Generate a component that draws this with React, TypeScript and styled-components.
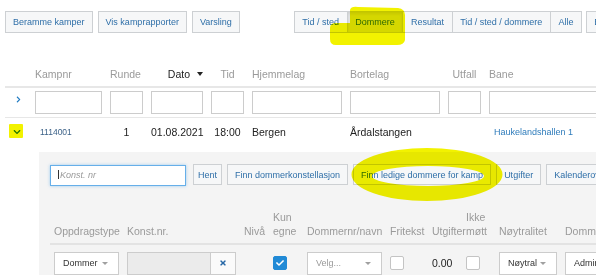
import styled, { createGlobalStyle } from "styled-components";
import { FaChevronRight, FaChevronDown, FaTimes, FaCheck } from "react-icons/fa";

const GlobalStyle = createGlobalStyle`
  html, body { margin: 0; padding: 0; background: #fff; overflow: hidden; }
  body { font-family: "Liberation Sans", Arial, sans-serif; color: #333; }
  *, *::before, *::after { box-sizing: border-box; }
`;

const Page = styled.div`
  position: relative;
  width: 596px;
  height: 275px;
  overflow: hidden;
`;

const Toolbar = styled.div`
  display: flex;
  align-items: center;
  padding: 11px 0 0 5px;
  white-space: nowrap;
`;

const ButtonGroup = styled.div<{ $joined?: boolean; $offset?: number }>`
  display: flex;
  flex-shrink: 0;
  gap: ${(p) => (p.$joined ? 0 : 5)}px;
  margin-left: ${(p) => p.$offset ?? 0}px;
  & > button + button {
    margin-left: ${(p) => (p.$joined ? -1 : 0)}px;
  }
`;

const Btn = styled.button<{ $active?: boolean; $h?: number; $pad?: number }>`
  flex-shrink: 0;
  height: ${(p) => p.$h ?? 22}px;
  padding: 0 ${(p) => p.$pad ?? 7}px;
  border: 1px solid #cdd0d3;
  border-radius: 0;
  background: ${(p) => (p.$active ? "#e1e3e5" : "#f6f7f8")};
  box-shadow: ${(p) => (p.$active ? "inset 0 2px 3px rgba(0,0,0,0.08)" : "none")};
  color: #2f6fa8;
  font: 9px "Liberation Sans", Arial, sans-serif;
  white-space: nowrap;
`;

const mainCols = "22px 67px 33px 52px 33px 90px 90px 33px 160px";

const MainRow = styled.div<{ $h: number; $line?: number }>`
  display: grid;
  grid-template-columns: ${mainCols};
  column-gap: 8px;
  align-items: center;
  margin-left: 5px;
  height: ${(p) => p.$h}px;
  border-bottom: ${(p) => (p.$line ? `${p.$line}px solid #e7e7e7` : "none")};
`;

const HeaderRow = styled(MainRow)`
  margin-top: 29px;
`;

const HeadCell = styled.div<{ $align?: string; $dark?: boolean }>`
  display: flex;
  align-items: center;
  justify-content: ${(p) => p.$align ?? "flex-start"};
  gap: 7px;
  font-size: 10.5px;
  color: ${(p) => (p.$dark ? "#222" : "#9a9a9a")};
  white-space: nowrap;
`;

const SortArrow = styled.span`
  width: 0;
  height: 0;
  border-left: 3.5px solid transparent;
  border-right: 3.5px solid transparent;
  border-top: 4px solid #222;
`;

const ChevronCell = styled.div<{ $down?: boolean }>`
  display: flex;
  align-self: ${(p) => (p.$down ? "center" : "start")};
  padding-left: ${(p) => (p.$down ? 8 : 10)}px;
  margin-top: ${(p) => (p.$down ? 0 : 8)}px;
  color: #1f7ac2;
`;

const FilterInput = styled.input`
  width: 100%;
  height: 23px;
  border: 1px solid #cccccc;
  border-radius: 0;
  background: #fff;
  padding: 0 4px;
`;

const DataCell = styled.div<{ $align?: string; $size?: number; $color?: string; $pad?: number }>`
  text-align: ${(p) => p.$align ?? "left"};
  font-size: ${(p) => p.$size ?? 10.5}px;
  color: ${(p) => p.$color ?? "#222"};
  padding-left: ${(p) => p.$pad ?? 0}px;
  white-space: nowrap;
`;

const Panel = styled.div`
  margin: 7px 0 0 39px;
  background: #f4f4f4;
  padding: 12px 0 30px 11px;
`;

const ActionRow = styled.div`
  display: flex;
  align-items: center;
  gap: 5px;
  white-space: nowrap;
`;

const KonstField = styled.div`
  position: relative;
  flex-shrink: 0;
  width: 136px;
  margin-right: 2px;
`;

const KonstInput = styled.input`
  width: 100%;
  height: 21px;
  border: 1px solid #66afe9;
  border-radius: 0;
  outline: none;
  box-shadow: 0 0 3px rgba(102, 175, 233, 0.6);
  background: #fff;
  padding: 0 0 0 9px;
  font: 9px "Liberation Sans", Arial, sans-serif;
  &::placeholder {
    color: #9a9a9a;
    font-style: italic;
  }
`;

const TextCaret = styled.span`
  position: absolute;
  left: 8px;
  top: 6px;
  width: 1px;
  height: 9px;
  background: #333;
`;

const subCols = "73px 117px 29px 34px 83px 42px 34px 33px 66px 120px";

const SubGrid = styled.div`
  display: grid;
  grid-template-columns: ${subCols};
  margin-top: 24px;
`;

const SubHead = styled.div<{ $align?: string; $wrap?: boolean }>`
  display: flex;
  flex-direction: column;
  justify-content: flex-end;
  text-align: ${(p) => p.$align ?? "left"};
  padding: 0 4px 4px;
  border-bottom: 2px solid #e3e3e3;
  font-size: 10.5px;
  line-height: 14.5px;
  color: #9a9a9a;
  white-space: ${(p) => (p.$wrap ? "normal" : "nowrap")};
`;

const SubCell = styled.div`
  display: flex;
  align-items: center;
  height: 23px;
  margin-top: 7px;
  padding: 0 4px;
  font-size: 10.5px;
  color: #222;
  white-space: nowrap;
`;

const Select = styled.div<{ $w: number; $muted?: boolean }>`
  flex-shrink: 0;
  display: flex;
  align-items: center;
  justify-content: space-between;
  width: ${(p) => p.$w}px;
  height: 23px;
  padding: 0 10px 0 8px;
  border: 1px solid #cccccc;
  background: #fff;
  font-size: 9px;
  color: ${(p) => (p.$muted ? "#9a9a9a" : "#333")};
  overflow: hidden;
`;

const SelectCaret = styled.span`
  flex-shrink: 0;
  width: 0;
  height: 0;
  border-left: 3px solid transparent;
  border-right: 3px solid transparent;
  border-top: 3px solid #a0a0a0;
`;

const DisabledInput = styled.div`
  width: 84px;
  height: 23px;
  border: 1px solid #cccccc;
  background: #ebebeb;
`;

const ClearBtn = styled.div`
  display: flex;
  align-items: center;
  justify-content: center;
  width: 26px;
  height: 23px;
  margin-left: -1px;
  border: 1px solid #cccccc;
  background: #fafafa;
  color: #2667a6;
`;

const Checkbox = styled.span<{ $checked?: boolean }>`
  display: flex;
  align-items: center;
  justify-content: center;
  width: 14px;
  height: 14px;
  border-radius: 2px;
  border: 1px solid ${(p) => (p.$checked ? "#218ad6" : "#c4c4c4")};
  background: ${(p) => (p.$checked ? "#218ad6" : "#fff")};
  color: #fff;
`;

const Marker = styled.svg`
  position: absolute;
  left: 0;
  top: 0;
  pointer-events: none;
  mix-blend-mode: multiply;
`;

const leftButtons = ["Beramme kamper", "Vis kamprapporter", "Varsling"];
const viewButtons = ["Tid / sted", "Dommere", "Resultat", "Tid / sted / dommere", "Alle"];

export default function App() {
  return (
    <Page>
      <GlobalStyle />
      <Toolbar>
        <ButtonGroup>
          {leftButtons.map((b) => (
            <Btn key={b}>{b}</Btn>
          ))}
        </ButtonGroup>
        <ButtonGroup $joined $offset={54}>
          {viewButtons.map((b) => (
            <Btn key={b} $pad={7.6} $active={b === "Dommere"}>
              {b}
            </Btn>
          ))}
        </ButtonGroup>
        <ButtonGroup $offset={4}>
          <Btn>Eksporter</Btn>
        </ButtonGroup>
      </Toolbar>

      <HeaderRow $h={26} $line={2}>
        <span />
        <HeadCell>Kampnr</HeadCell>
        <HeadCell>Runde</HeadCell>
        <HeadCell $align="flex-end" $dark>
          Dato <SortArrow />
        </HeadCell>
        <HeadCell $align="center">Tid</HeadCell>
        <HeadCell>Hjemmelag</HeadCell>
        <HeadCell>Bortelag</HeadCell>
        <HeadCell $align="center">Utfall</HeadCell>
        <HeadCell>Bane</HeadCell>
      </HeaderRow>

      <MainRow $h={30} $line={1}>
        <ChevronCell>
          <FaChevronRight size={7} />
        </ChevronCell>
        <FilterInput />
        <FilterInput />
        <FilterInput />
        <FilterInput />
        <FilterInput />
        <FilterInput />
        <FilterInput />
        <FilterInput />
      </MainRow>

      <MainRow $h={27}>
        <ChevronCell $down>
          <FaChevronDown size={8} />
        </ChevronCell>
        <DataCell $size={8.5} $color="#3d6288" $pad={5}>
          1114001
        </DataCell>
        <DataCell $align="center">1</DataCell>
        <DataCell>01.08.2021</DataCell>
        <DataCell $align="center">18:00</DataCell>
        <DataCell>Bergen</DataCell>
        <DataCell>Årdalstangen</DataCell>
        <DataCell />
        <DataCell $size={9} $color="#2f7cbb" $pad={5}>
          Haukelandshallen 1
        </DataCell>
      </MainRow>

      <Panel>
        <ActionRow>
          <KonstField>
            <KonstInput placeholder="Konst. nr" />
            <TextCaret />
          </KonstField>
          <Btn $h={21} $pad={4}>Hent</Btn>
          <Btn $h={21}>Finn dommerkonstellasjon</Btn>
          <Btn $h={21}>Finn ledige dommere for kamp</Btn>
          <Btn $h={21}>Utgifter</Btn>
          <Btn $h={21}>Kalenderoversikt</Btn>
        </ActionRow>

        <SubGrid>
          <SubHead>Oppdragstype</SubHead>
          <SubHead>Konst.nr.</SubHead>
          <SubHead $align="right">Nivå</SubHead>
          <SubHead $wrap>Kun egne</SubHead>
          <SubHead>Dommernr/navn</SubHead>
          <SubHead>Fritekst</SubHead>
          <SubHead>Utgifter</SubHead>
          <SubHead $wrap>Ikke møtt</SubHead>
          <SubHead>Nøytralitet</SubHead>
          <SubHead>Dommerstatus</SubHead>

          <SubCell>
            <Select $w={65}>
              Dommer <SelectCaret />
            </Select>
          </SubCell>
          <SubCell>
            <DisabledInput />
            <ClearBtn>
              <FaTimes size={8} />
            </ClearBtn>
          </SubCell>
          <SubCell />
          <SubCell>
            <Checkbox $checked>
              <FaCheck size={8} />
            </Checkbox>
          </SubCell>
          <SubCell>
            <Select $w={75} $muted>
              Velg... <SelectCaret />
            </Select>
          </SubCell>
          <SubCell>
            <Checkbox />
          </SubCell>
          <SubCell>0.00</SubCell>
          <SubCell>
            <Checkbox />
          </SubCell>
          <SubCell>
            <Select $w={58}>
              Nøytral <SelectCaret />
            </Select>
          </SubCell>
          <SubCell>
            <Select $w={90}>
              Administrator <SelectCaret />
            </Select>
          </SubCell>
        </SubGrid>
      </Panel>

      <Marker width={596} height={275} viewBox="0 0 596 275">
        <path
          fill="#f2f200"
          d="M350 10 Q351 6 358 7 L398 8 Q405 9 405 15 L405 40 Q404 45 397 45 L336 45 Q330 45 330 39 L330 28 Q330 23 336 23 L350 23 Z"
        />
        <rect x={9} y={124} width={14} height={14} rx={1} fill="#f2f200" />
        <path
          fill="#f2f200"
          fillRule="evenodd"
          d="M351.5 174.5 a75.5 26.5 0 1 0 151 0 a75.5 26.5 0 1 0 -151 0 Z M372 176 a56 10 0 1 0 112 0 a56 10 0 1 0 -112 0 Z"
        />
      </Marker>
    </Page>
  );
}
